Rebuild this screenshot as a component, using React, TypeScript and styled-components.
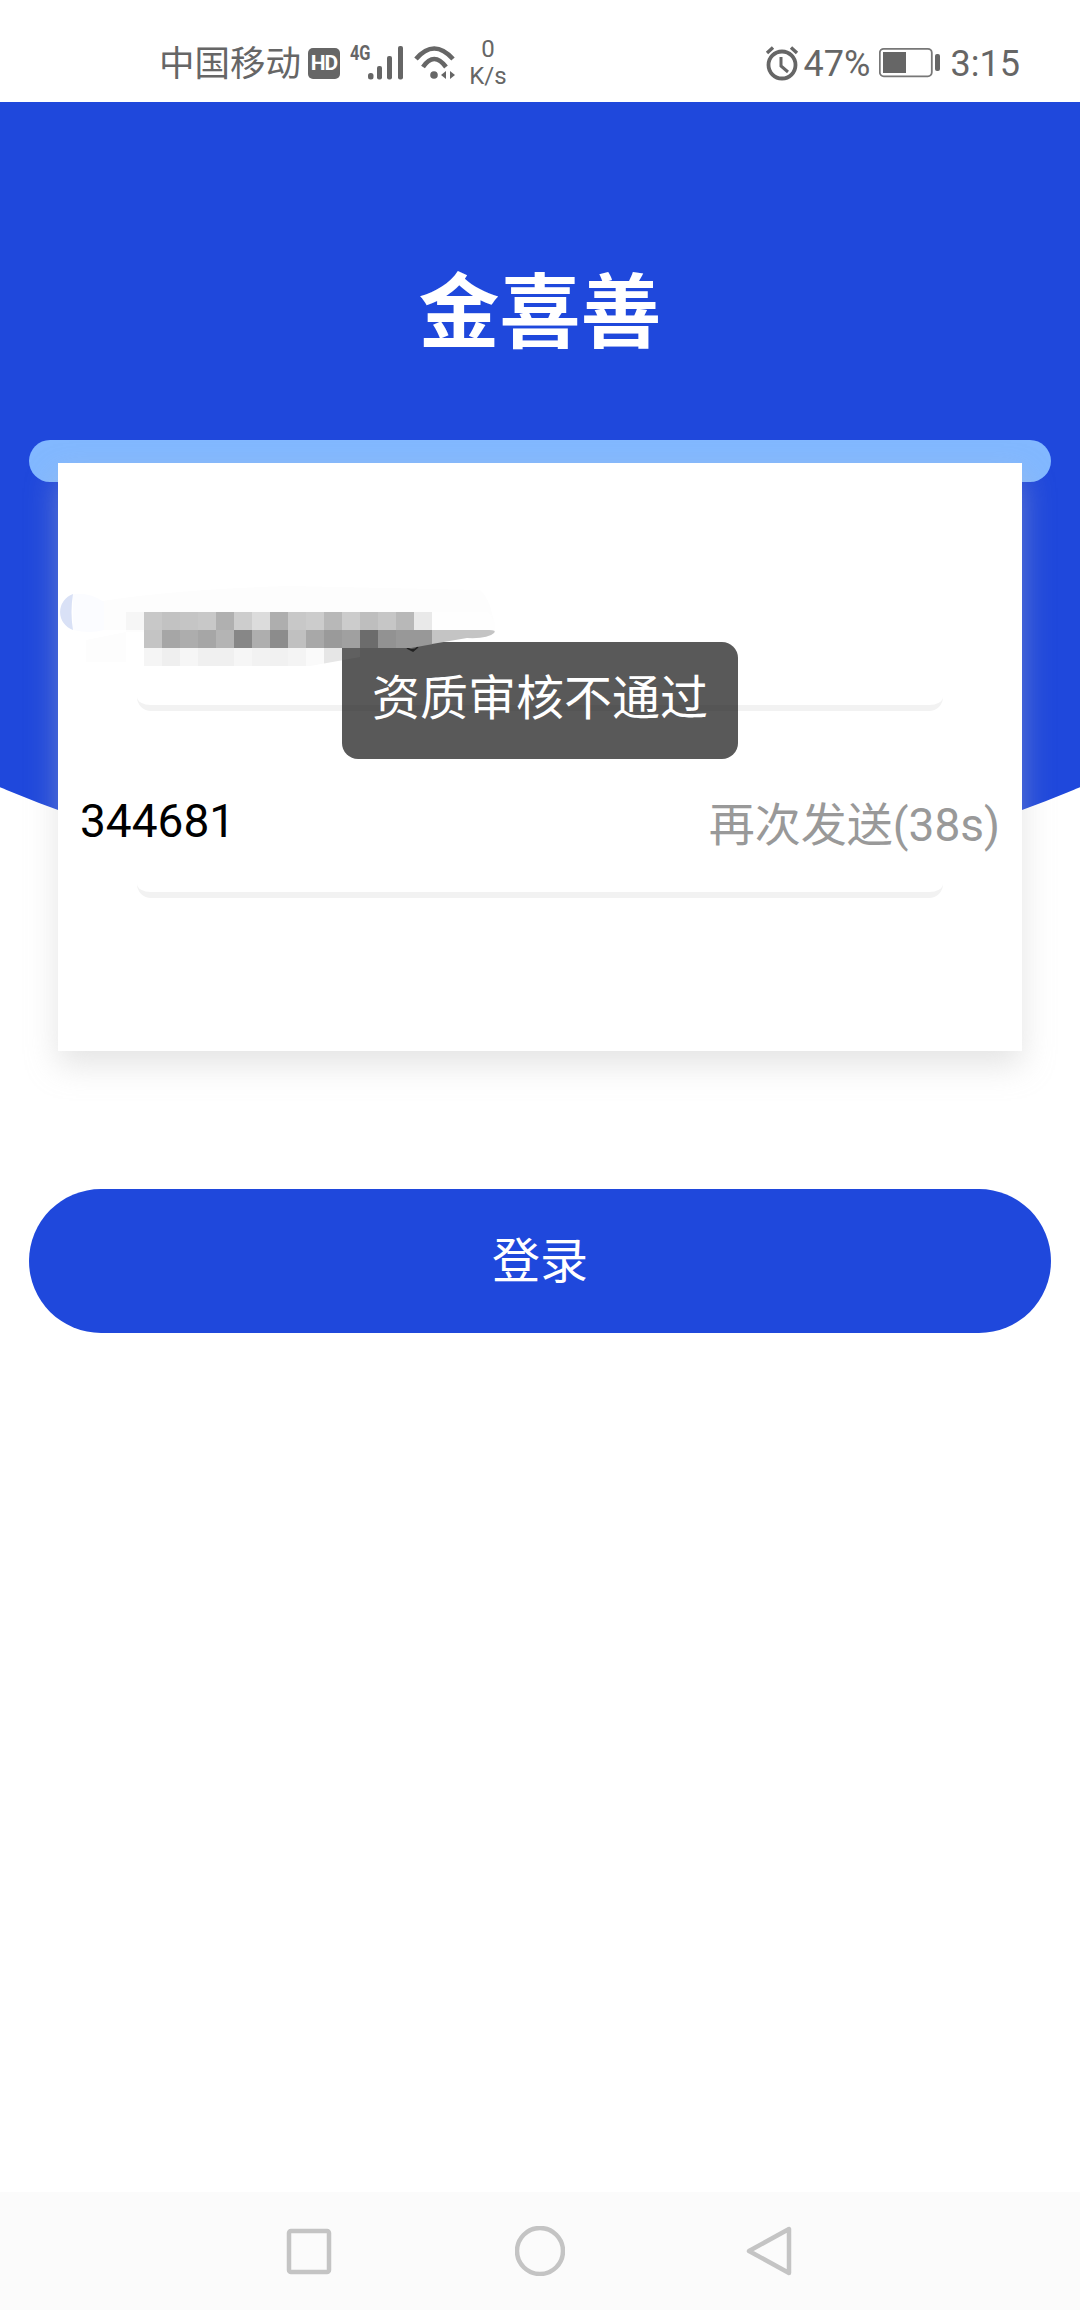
import React from 'react';
import styled, { createGlobalStyle } from 'styled-components';

const BLUE = '#1f48dc';
const FONT = 'Roboto, "Noto Sans CJK SC", sans-serif';

const GlobalStyle = createGlobalStyle`
  html, body {
    margin: 0;
    padding: 0;
    background: #fff;
  }
  * {
    box-sizing: border-box;
  }
`;

const Page = styled.div`
  position: relative;
  width: 1080px;
  height: 2310px;
  display: flex;
  flex-direction: column;
  overflow: hidden;
  background: #fff;
  font-family: ${FONT};
`;

/* status bar */
const StatusBar = styled.div`
  height: 102px;
  flex: none;
  display: flex;
  align-items: center;
  justify-content: space-between;
  padding: 24px 60px 0 159px;
  background: #fff;
  color: #666;
  font-size: 36px;
`;

const StatusGroup = styled.div`
  display: flex;
  align-items: center;
`;

const Carrier = styled.span`
  font-size: 35.5px;
  line-height: 42px;
  width: 149px;
  margin-top: 2px;
  white-space: nowrap;
`;

const HdBadge = styled.span`
  width: 32px;
  height: 31px;
  border-radius: 5px;
  background: #666;
  color: #fff;
  font-size: 21px;
  font-weight: 700;
  letter-spacing: -1px;
  line-height: 31px;
  text-align: center;
`;

const SignalBlock = styled.div`
  position: relative;
  margin-left: 11px;
  width: 53px;
  height: 36px;
  display: flex;
  justify-content: flex-end;
`;

const NetworkTag = styled.span`
  position: absolute;
  left: -4px;
  top: -2px;
  font-size: 21px;
  line-height: 20px;
  font-weight: 700;
  transform: scaleX(0.78);
`;

const Speed = styled.div`
  margin-left: 9px;
  width: 44px;
  display: flex;
  flex-direction: column;
  align-items: center;
  font-size: 24px;
  line-height: 27px;
  margin-top: -1px;
`;

const Percent = styled.span`
  margin-left: 5px;
  width: 75px;
  line-height: 42px;
  margin-top: 2px;
`;

const Clock = styled.span`
  margin-left: 10px;
  line-height: 42px;
  margin-top: 2px;
`;

/* blue backdrop behind the form */
const Backdrop = styled.div`
  position: absolute;
  left: 0;
  top: 102px;
  width: 1080px;
  height: 800px;
  overflow: hidden;

  &::after {
    content: '';
    position: absolute;
    left: -854px;
    top: -1994px;
    width: 2788px;
    height: 2788px;
    border-radius: 50%;
    background: ${BLUE};
  }
`;

const Main = styled.main`
  position: relative;
  flex: 1;
  display: flex;
  flex-direction: column;
`;

const Title = styled.h1`
  margin: 0;
  padding: 169px 0 83px;
  text-align: center;
  color: #fff;
  font-size: 81px;
  line-height: 86px;
  font-weight: 700;
`;

const TopBar = styled.div`
  height: 42px;
  margin: 0 29px;
  border-radius: 21px;
  background: #82b8ff;
`;

const Card = styled.section`
  position: relative;
  height: 588px;
  margin: -19px 58px 0;
  padding-top: 61px;
  background: #fff;
  box-shadow: 0 14px 30px rgba(190, 190, 190, 0.42);
`;

const Field = styled.div`
  height: 187px;
  display: flex;
  flex-direction: column;
`;

const FieldRow = styled.div`
  height: 171px;
  padding: 49px 22px 0 22px;
  display: flex;
  align-items: center;
  justify-content: space-between;
`;

const CodeValue = styled.span`
  color: #000;
  font-size: 46px;
  line-height: 52px;
`;

const ResendLabel = styled.span`
  color: #999;
  font-size: 46px;
  line-height: 54px;
  margin-top: 7px;
`;

const Underline = styled.div`
  height: 16px;
  margin: 0 79px 0 79px;
  border-bottom: 6px solid #f2f2f2;
  border-radius: 0 0 14px 14px;
`;

const LoginButton = styled.button`
  height: 144px;
  margin: 138px 29px 0;
  padding: 0 0 9px;
  border: 0;
  border-radius: 72px;
  background: ${BLUE};
  color: #fff;
  font-family: ${FONT};
  font-size: 48px;
`;

const Toast = styled.div`
  position: absolute;
  left: 342px;
  top: 642px;
  width: 396px;
  height: 117px;
  border-radius: 16px;
  background: rgba(0, 0, 0, 0.65);
  color: #fff;
  font-size: 48px;
  line-height: 113px;
  text-align: center;
  white-space: nowrap;
`;

/* pixelated patch over the phone number */
const Smudge = styled.svg`
  position: absolute;
  left: 58px;
  top: 583px;
  width: 460px;
  height: 100px;
`;

/* bottom navigation */
const NavBar = styled.nav`
  height: 118px;
  flex: none;
  display: flex;
  align-items: center;
  justify-content: center;
  gap: 180px;
  background: #fbfbfb;
`;

const NavIcon = styled.svg`
  width: 50px;
  height: 50px;
  fill: none;
  stroke: #c4c4c4;
  stroke-width: 4.5;
  stroke-linejoin: round;
`;

const CELL = 18;
const ROWS: { y: number; from: number; shades: string[] }[] = [
  {
    y: 612,
    from: 126,
    shades: ['f6', 'c8', 'c2', 'c5', 'c8', 'b0', 'cd', 'dc', 'ae', 'c8', 'cc', 'b8', 'cc', 'be', 'c6', 'b8', 'e9'],
  },
  {
    y: 630,
    from: 144,
    shades: ['c4', 'a6', 'ad', 'a6', 'b4', '87', 'ae', '8c', 'c0', 'a8', '9a', 'a0', '6c', '92', '98', '98'],
  },
  {
    y: 648,
    from: 144,
    shades: ['f5', 'ef', 'f6', 'f0', 'f0', 'f6', 'f2', 'f1', 'f4', 'fa', 'e6', '606060'],
  },
];

function shadeColor(s: string) {
  return s.length === 2 ? `#${s}${s}${s}` : `#${s}`;
}

function SignalIcon() {
  return (
    <svg width="36" height="36" viewBox="369 44 36 36" fill="#666">
      <rect x="369" y="72" width="5.5" height="6.5" rx="2.5" />
      <rect x="378" y="65" width="5" height="13.5" rx="2" />
      <rect x="388" y="55" width="5" height="23.5" rx="2" />
      <rect x="399" y="45" width="5" height="33.5" rx="2" />
    </svg>
  );
}

function WifiIcon() {
  return (
    <svg width="44" height="36" viewBox="412 44 44 36" style={{ marginLeft: 9 }} fill="none" stroke="#666" strokeWidth="4.6">
      <path d="M415 58 Q433 37 452 58" />
      <path d="M422 66 Q433 50 445 66" />
      <circle cx="433" cy="74" r="3.8" fill="#666" stroke="none" />
      <path d="M445 70 L440 74 L445 78 Z M449 70 L454 74 L449 78 Z" fill="#666" stroke="none" />
    </svg>
  );
}

function AlarmIcon() {
  return (
    <svg width="34" height="36" viewBox="764 44 34 36" fill="none" stroke="#666" strokeWidth="3.8">
      <circle cx="781" cy="64" r="13.5" />
      <path d="M780 56 V65 L787 71" strokeWidth="3" />
      <path d="M766 52 L772 46.5 M796 52 L790 46.5" strokeWidth="3.4" />
    </svg>
  );
}

function BatteryIcon() {
  return (
    <svg width="62" height="32" viewBox="880 47 62 32">
      <rect x="880.8" y="48.8" width="52" height="27.5" rx="4" fill="none" stroke="#777" strokeWidth="1.8" />
      <rect x="884" y="52" width="23" height="21" fill="#666" />
      <rect x="936" y="54" width="5" height="17" rx="2" fill="#666" />
    </svg>
  );
}

function RedactionSmudge() {
  return (
    <Smudge viewBox="58 583 460 100">
      <defs>
        <clipPath id="patch">
          <path d="M126 612 H500 V632 L467 638 L310 666 H126 Z" />
        </clipPath>
      </defs>
      <path d="M85 604 Q160 590 290 586 L480 590 Q492 600 495 632 H126 L86 640 V662 H126 V630 L85 630 Z" fill="#fdfdfd" />
      <path d="M73 594 Q90 592 104 602 V630 Q90 634 73 630 Z" fill="#fbfcff" />
      <path d="M73 594 A19 19 0 0 0 73 630 Q70 612 73 594 Z" fill="#d9e1f6" />
      <path d="M407 648 Q413 652 418 647 L413 651 Z" fill="#222" stroke="#222" strokeWidth="1.5" />
      <g clipPath="url(#patch)" shapeRendering="crispEdges">
        {ROWS.map(row =>
          row.shades.map((s, i) => (
            <rect
              key={`${row.y}-${i}`}
              x={row.from + i * CELL}
              y={row.y}
              width={CELL}
              height={CELL}
              fill={shadeColor(s)}
            />
          )),
        )}
      </g>
      <path d="M432 630 H489 Q497 630 494 633 Q488 639 467 638 L432 644 Z" fill="#c4c4c4" />
      <path d="M432 612 H488 Q496 618 495 630 H432 Z" fill="#fefefe" />
    </Smudge>
  );
}

export default function App() {
  return (
    <Page>
      <GlobalStyle />
      <Backdrop />
      <StatusBar>
        <StatusGroup>
          <Carrier>中国移动</Carrier>
          <HdBadge>HD</HdBadge>
          <SignalBlock>
            <NetworkTag>4G</NetworkTag>
            <SignalIcon />
          </SignalBlock>
          <WifiIcon />
          <Speed>
            <span>0</span>
            <span>K/s</span>
          </Speed>
        </StatusGroup>
        <StatusGroup>
          <AlarmIcon />
          <Percent>47%</Percent>
          <BatteryIcon />
          <Clock>3:15</Clock>
        </StatusGroup>
      </StatusBar>
      <Main>
        <Title>金喜善</Title>
        <TopBar />
        <Card>
          <Field>
            <FieldRow />
            <Underline />
          </Field>
          <Field>
            <FieldRow>
              <CodeValue>344681</CodeValue>
              <ResendLabel>再次发送(38s)</ResendLabel>
            </FieldRow>
            <Underline />
          </Field>
        </Card>
        <LoginButton>登录</LoginButton>
      </Main>
      <NavBar>
        <NavIcon viewBox="0 0 50 50">
          <rect x="4" y="5" width="40" height="41" rx="2" />
        </NavIcon>
        <NavIcon viewBox="0 0 50 50">
          <circle cx="25" cy="25" r="23" />
        </NavIcon>
        <NavIcon viewBox="0 0 50 50">
          <path d="M44 3 V47 L4 25 Z" />
        </NavIcon>
      </NavBar>
      <Toast>资质审核不通过</Toast>
      <RedactionSmudge />
    </Page>
  );
}
